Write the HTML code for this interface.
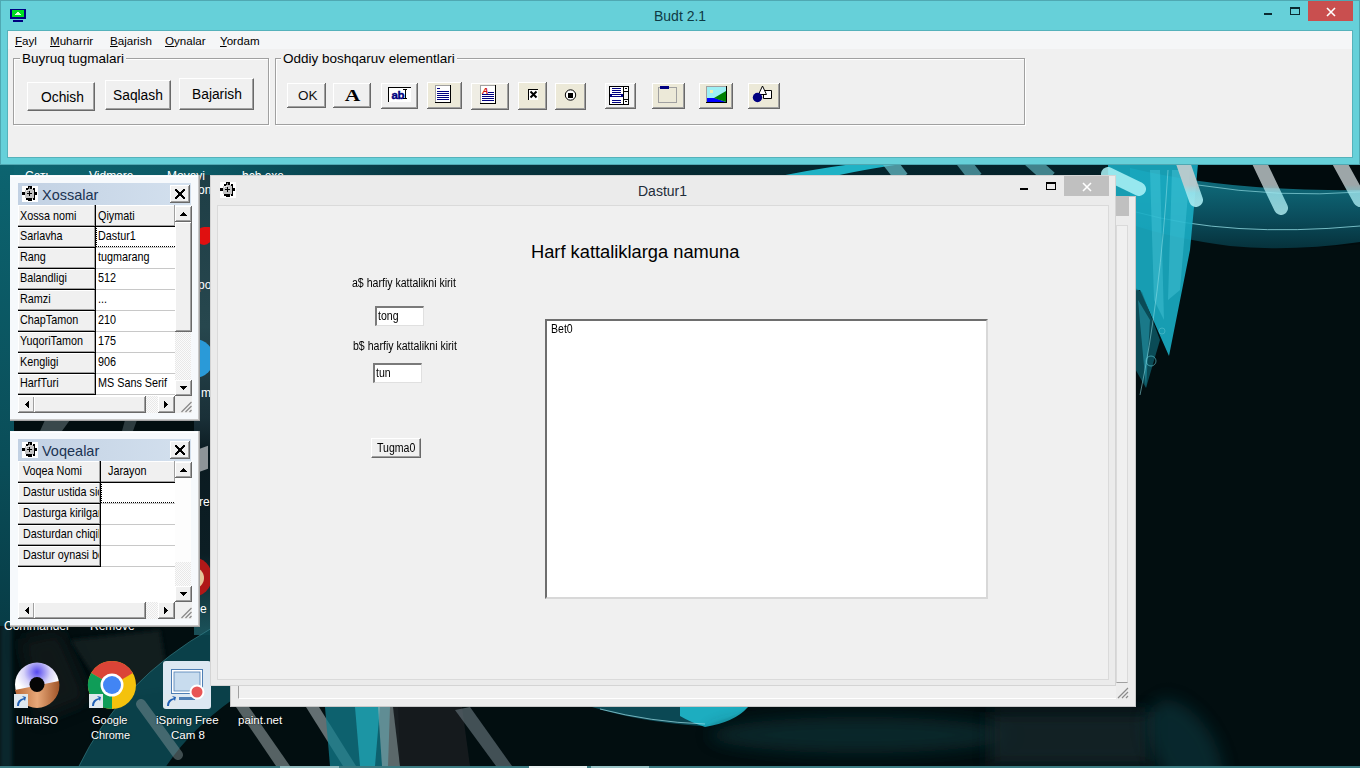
<!DOCTYPE html>
<html><head><meta charset="utf-8">
<style>
*{margin:0;padding:0;box-sizing:border-box}
html,body{width:1360px;height:768px;overflow:hidden;background:#03090c;font-family:"Liberation Sans",sans-serif}
.a{position:absolute}
.t{position:absolute;white-space:pre;line-height:1}
.btn{position:absolute;background:#f0f0f0;border-top:1px solid #fff;border-left:1px solid #fff;border-right:1px solid #696969;border-bottom:1px solid #696969;box-shadow:inset -1px -1px 0 #a0a0a0}
</style></head><body>
<!-- DESKTOP -->
<svg class="a" style="left:0;top:0" width="1360" height="768" viewBox="0 0 1360 768">
<defs>
<filter id="bl2" x="-20%" y="-20%" width="140%" height="140%"><feGaussianBlur stdDeviation="2"/></filter>
<filter id="bl6" x="-50%" y="-50%" width="200%" height="200%"><feGaussianBlur stdDeviation="8"/></filter>
<linearGradient id="gT" x1="0" y1="0" x2="1360" y2="0" gradientUnits="userSpaceOnUse">
<stop offset="0" stop-color="#0d6672"/><stop offset="0.15" stop-color="#0b5864"/><stop offset="0.3" stop-color="#073843"/><stop offset="0.5" stop-color="#052a32"/><stop offset="0.75" stop-color="#04222a"/><stop offset="1" stop-color="#03161b"/></linearGradient>
<linearGradient id="gL" x1="0" y1="160" x2="0" y2="768" gradientUnits="userSpaceOnUse">
<stop offset="0" stop-color="#0c6470"/><stop offset="0.5" stop-color="#0a4d58"/><stop offset="0.8" stop-color="#073a44"/><stop offset="1" stop-color="#05252c"/></linearGradient>
<linearGradient id="gBL" x1="0" y1="0" x2="240" y2="0" gradientUnits="userSpaceOnUse"><stop offset="0" stop-color="#073a44"/><stop offset="0.15" stop-color="#05222a"/><stop offset="0.6" stop-color="#04161b" stop-opacity="0"/></linearGradient>
<linearGradient id="tube" x1="0" y1="160" x2="0" y2="215" gradientUnits="userSpaceOnUse"><stop offset="0" stop-color="#c4cdcf"/><stop offset="0.45" stop-color="#c4cdcf"/><stop offset="0.6" stop-color="#9fe6ee"/><stop offset="1" stop-color="#b5f0f4"/></linearGradient>
<linearGradient id="band" x1="0" y1="185" x2="0" y2="250" gradientUnits="userSpaceOnUse"><stop offset="0" stop-color="#0f6c7c"/><stop offset="0.5" stop-color="#0b5060"/><stop offset="1" stop-color="#06323c"/></linearGradient>
<linearGradient id="gS" x1="0" y1="175" x2="0" y2="680" gradientUnits="userSpaceOnUse"><stop offset="0" stop-color="#1e3e46"/><stop offset="0.3" stop-color="#27474e"/><stop offset="0.48" stop-color="#1a3038"/><stop offset="0.55" stop-color="#0b1b21"/><stop offset="0.75" stop-color="#0c1e24"/><stop offset="0.9" stop-color="#1a5058"/><stop offset="1" stop-color="#15464e"/></linearGradient>
</defs>
<rect width="1360" height="768" fill="#020e10"/>
<rect x="0" y="160" width="1360" height="40" fill="url(#gT)"/>
<rect x="0" y="160" width="14" height="466" fill="url(#gL)"/>
<rect x="194" y="175" width="20" height="460" fill="url(#gS)"/>
<!-- top strip ring highlights -->
<path d="M780 176 Q830 166 885 160 L930 160 Q870 168 835 176 Z" fill="#22c2d6" opacity="0.9"/>
<line x1="888" y1="160" x2="902" y2="178" stroke="#6cc4cf" stroke-width="14" opacity="0.7"/>
<line x1="962" y1="160" x2="976" y2="178" stroke="#6cc4cf" stroke-width="14" opacity="0.6"/>
<line x1="1030" y1="160" x2="1050" y2="178" stroke="#6cc4cf" stroke-width="14" opacity="0.6"/>
<!-- top-right ring -->
<path d="M1110 164 L1360 164 L1360 244 Q1300 250 1250 246 Q1180 238 1130 222 L1110 215 Z" fill="#010b0d"/>
<path d="M1130 168 Q1230 192 1360 190 L1360 242 Q1290 252 1230 246 Q1170 238 1130 224 Z" fill="url(#band)" opacity="0.95"/>
<path d="M1136 212 Q1230 238 1360 226" stroke="#8fd8e0" stroke-width="1" fill="none" opacity="0.8"/>
<path d="M1198 185 Q1280 198 1360 192" stroke="#8fd8e0" stroke-width="1" fill="none" opacity="0.7"/>
<!-- vertical cyan blades -->
<path d="M1108 164 L1198 164 L1190 250 L1169 356 L1140 290 L1110 292 Z" fill="#1aadc4" opacity="0.9"/>
<path d="M1150 170 L1160 170 L1164 320 L1154 300 Z" fill="#5fdcea" opacity="0.3"/>
<path d="M1172 170 L1190 170 L1180 290 L1168 300 Z" fill="#5fdcea" opacity="0.3"/>
<path d="M1130 285 L1142 292 L1160 340 L1146 388 L1130 360 Z" fill="#0f6d7c" opacity="0.65"/>
<path d="M1138 300 L1150 320 L1146 388 Z" fill="#2aa8bb" opacity="0.5"/>
<path d="M1168 170 Q1160 300 1140 395" stroke="#8fe0e8" stroke-width="1" fill="none" opacity="0.55"/>
<circle cx="1151" cy="361" r="5" fill="none" stroke="#5fc8d4" stroke-width="1" opacity="0.6"/>
<circle cx="1162" cy="331" r="3" fill="none" stroke="#5fc8d4" stroke-width="1" opacity="0.5"/>
<!-- white tubes -->
<line x1="1182" y1="160" x2="1196" y2="200" stroke="url(#tube)" stroke-width="14" stroke-linecap="round" opacity="0.9"/>
<line x1="1258" y1="160" x2="1281" y2="208" stroke="url(#tube)" stroke-width="14" stroke-linecap="round" opacity="0.8"/>
<line x1="1338" y1="160" x2="1360" y2="200" stroke="url(#tube)" stroke-width="14" stroke-linecap="round" opacity="0.8"/>
<line x1="1108" y1="174" x2="1139" y2="189" stroke="#aef4f8" stroke-width="14" stroke-linecap="round" opacity="0.85"/>
<!-- gap between panels streaks -->
<polygon points="45,420 70,420 62,431 40,431" fill="#6f8286" opacity="0.5"/>
<polygon points="125,420 137,420 133,431 122,431" fill="#6f8286" opacity="0.4"/>
<!-- bottom-left wallpaper -->
<rect x="0" y="626" width="12" height="142" fill="#0a2e34" opacity="0.8" filter="url(#bl2)"/>
<polygon points="20,640 60,630 90,700 40,720" fill="#121a1e" opacity="0.7" filter="url(#bl6)"/>
<polygon points="70,640 160,630 170,690 110,700" fill="#182024" opacity="0.8" filter="url(#bl2)"/>
<path d="M78 768 Q120 680 212 628 L232 628 L232 700 Q190 730 165 768 Z" fill="#0b4650" opacity="0.9"/>
<path d="M78 768 Q120 680 212 628" stroke="#5fb8c0" stroke-width="1" fill="none" opacity="0.35"/>
<line x1="141" y1="704" x2="178" y2="755" stroke="#8a9a9d" stroke-width="10" stroke-linecap="round" opacity="0.45"/>
<!-- bottom strip -->
<polygon points="236,707 249,707 290,766 276,766" fill="#a9b6b8" opacity="0.5"/>
<polygon points="306,707 319,707 356,766 343,766" fill="#b4c0c2" opacity="0.55"/>
<polygon points="325,707 390,707 388,766 330,766" fill="#127e8e" opacity="0.75"/>
<polygon points="355,707 380,707 375,766 360,766" fill="#27b8c8" opacity="0.6"/>
<polygon points="378,707 398,707 400,766 382,766" fill="#a6b2b4" opacity="0.55"/>
<polygon points="393,707 462,707 470,766 400,766" fill="#161b1f" opacity="0.95"/>
<polygon points="455,710 470,707 512,766 496,766" fill="#5e6c74" opacity="0.7"/>
<path d="M592 707 Q640 722 700 726 Q730 720 748 707 Z" fill="#0c4f5c" opacity="0.9"/>
<path d="M680 707 L748 707 Q735 722 705 727 Q690 722 680 716 Z" fill="#1fb8cc" opacity="0.9"/>
<path d="M600 709 Q650 722 705 724" stroke="#9fe0e8" stroke-width="1" fill="none" opacity="0.7"/>
<ellipse cx="860" cy="735" rx="150" ry="18" fill="#0b3036" opacity="0.7" filter="url(#bl6)"/>
<rect x="990" y="712" width="160" height="54" fill="#15282c" opacity="0.8" filter="url(#bl6)"/>
<ellipse cx="1185" cy="750" rx="30" ry="55" transform="rotate(-30 1185 750)" fill="#0d3d44" opacity="0.55" filter="url(#bl6)"/>
<!-- taskbar edge -->
<rect x="0" y="766" width="1360" height="2" fill="#3c7b82"/>
<rect x="280" y="766" width="59" height="2" fill="#8fb8bc"/>
<rect x="529" y="766" width="58" height="2" fill="#e8f0f0"/>
<rect x="591" y="766" width="58" height="2" fill="#9ac4c7"/>
</svg>
<!-- DESKTOP ICONS -->
<div class="t" style="left:25px;top:170px;font-size:12px;color:#fff">Сеть</div>
<div class="t" style="left:89px;top:170px;font-size:12px;color:#fff">Vidmore</div>
<div class="t" style="left:167px;top:170px;font-size:12px;color:#fff">Movavi</div>
<div class="t" style="left:242px;top:170px;font-size:12px;color:#fff">bcb.exe</div>
<div class="t" style="left:198px;top:184px;font-size:12px;color:#fff">on</div>
<div class="t" style="left:198px;top:279px;font-size:12px;color:#fff">po</div>
<div class="t" style="left:201px;top:387px;font-size:12px;color:#fff">m</div>
<div class="t" style="left:199px;top:496px;font-size:12px;color:#fff">re-</div>
<div class="t" style="left:200px;top:603px;font-size:12px;color:#fff">e</div>
<div class="a" style="left:196px;top:227px;width:16px;height:18px;background:#e01010;border-radius:50% 20% 50% 50%"></div>
<div class="a" style="left:175px;top:339px;width:39px;height:39px;background:#2a9ad8;border-radius:50%"></div>
<div class="a" style="left:190px;top:449px;width:18px;height:23px;background:#8d9498;transform:skewY(-20deg)"></div>
<div class="a" style="left:172px;top:557px;width:40px;height:40px;background:#b01818;border-radius:50%"></div>
<div class="a" style="left:182px;top:567px;width:22px;height:22px;background:#e6c79a;border-radius:50%"></div>
<div class="t" style="left:4px;top:620px;font-size:12px;color:#fff">Commander</div>
<div class="t" style="left:90px;top:620px;font-size:12px;color:#fff">Remove</div>
<!-- UltraISO -->
<svg class="a" style="left:0;top:650px" width="240" height="66">
<defs>
<radialGradient id="ult" cx="37" cy="22" r="22" gradientUnits="userSpaceOnUse"><stop offset="0" stop-color="#5548f0"/><stop offset="0.6" stop-color="#d8d4f8"/><stop offset="1" stop-color="#ffffff"/></radialGradient>
<linearGradient id="ulc" x1="0" y1="0" x2="1" y2="0"><stop offset="0" stop-color="#b86838"/><stop offset="0.5" stop-color="#e8a878"/><stop offset="1" stop-color="#a05428"/></linearGradient>
</defs>
<circle cx="37" cy="34.5" r="22" fill="url(#ult)"/>
<path d="M15 40 L59 31 A22 22 0 0 1 15 40 Z" fill="url(#ulc)"/>
<circle cx="37" cy="34.5" r="7.5" fill="#050505"/>
<circle cx="112" cy="35" r="24" fill="#f4c20d"/>
<path d="M112 35 L91.2 23 A24 24 0 0 1 132.8 23 Z" fill="#db4437"/>
<path d="M112 35 L91.2 23 A24 24 0 0 0 112 59 Z" fill="#0f9d58"/>
<path d="M112 35 L132.8 23 L101 40 Z" fill="#db4437"/>
<circle cx="112" cy="35" r="11.5" fill="#fff"/>
<circle cx="112" cy="35" r="9" fill="#4285f4"/>
<rect x="163" y="11" width="48" height="48" rx="3" fill="#dde8f2"/>
<rect x="171.5" y="19.5" width="31" height="24" fill="#fff" stroke="#4f7fb5" stroke-width="1"/>
<rect x="174" y="22" width="26" height="19" fill="#c8dcee" stroke="#4f7fb5" stroke-width="0.8"/>
<rect x="179" y="47" width="16" height="3" fill="#4f7fb5"/>
<circle cx="197" cy="42" r="6.5" fill="#e85555" stroke="#fff" stroke-width="2"/>
<g id="sc"><rect x="14" y="44" width="14" height="14" fill="#dfe8ee"/><path d="M17 56 Q17 49 24 48 L22 46 L26 47 L25 51 L24 49.5 Q19 51 19 56 Z" fill="#1f5fb4"/></g>
<use href="#sc" x="75"/>
<use href="#sc" x="150"/>
</svg>
<div class="t" style="left:16px;top:715px;font-size:11px;color:#fff;text-shadow:0 0 2px #000">UltraISO</div>
<div class="t" style="left:92px;top:715px;font-size:11px;color:#fff;text-shadow:0 0 2px #000">Google</div>
<div class="t" style="left:91px;top:730px;font-size:11px;color:#fff;text-shadow:0 0 2px #000">Chrome</div>
<div class="t" style="left:156px;top:715px;font-size:11.5px;color:#fff;text-shadow:0 0 2px #000">iSpring Free</div>
<div class="t" style="left:171px;top:730px;font-size:11.5px;color:#fff;text-shadow:0 0 2px #000">Cam 8</div>
<div class="t" style="left:238px;top:715px;font-size:11.5px;color:#fff;text-shadow:0 0 2px #000">paint.net</div>
<!-- MAIN WINDOW -->
<div class="a" style="left:0;top:0;width:1360px;height:165px;background:#66d0d9;border:1px solid #4fa8b2"></div>
<div class="a" style="left:7px;top:30px;width:1346px;height:128px;border:1px solid #55b2bb"></div>
<svg class="a" style="left:0;top:0" width="40" height="30" shape-rendering="crispEdges">
<rect x="10" y="9" width="16" height="10" fill="#000080"/>
<rect x="12" y="10" width="12" height="7" fill="#00e020"/>
<rect x="13" y="20" width="10" height="2" fill="#000080"/>
<path d="M15 15 L21 15 L19 12 L17 12 Z" fill="#e8ffe0"/>
</svg>
<div class="t" style="left:654px;top:9px;font-size:14px;color:#0e3a44">Budt 2.1</div>
<div class="a" style="left:1264px;top:13px;width:8px;height:2px;background:#0b2a30"></div>
<div class="a" style="left:1290px;top:7px;width:10px;height:8px;border:1px solid #0b2a30;border-top-width:2px"></div>
<div class="a" style="left:1308px;top:1px;width:45px;height:20px;background:#c94f4f"></div>
<svg class="a" style="left:1308px;top:1px" width="45" height="20"><path d="M19 7 L27 15 M27 7 L19 15" stroke="#fff" stroke-width="1.6"/></svg>
<!-- client -->
<div class="a" style="left:8px;top:31px;width:1344px;height:126px;background:#f0f0f0"></div>
<div class="a" style="left:8px;top:31px;width:1344px;height:18px;background:#f5f6f7"></div>
<div class="t" style="left:15px;top:35px;font-size:11.6px;color:#000"><u>F</u>ayl</div>
<div class="t" style="left:50px;top:35px;font-size:11.6px;color:#000"><u>M</u>uharrir</div>
<div class="t" style="left:110px;top:35px;font-size:11.6px;color:#000"><u>B</u>ajarish</div>
<div class="t" style="left:165px;top:35px;font-size:11.6px;color:#000"><u>O</u>ynalar</div>
<div class="t" style="left:220px;top:35px;font-size:11.6px;color:#000"><u>Y</u>ordam</div>
<!-- group boxes -->
<div class="a" style="left:13px;top:58px;width:256px;height:67px;border:1px solid #a0a0a0;box-shadow:inset 1px 1px 0 #fff, 1px 1px 0 #fff"></div>
<div class="t" style="left:20px;top:52px;font-size:13.5px;color:#000;background:#f0f0f0;padding:0 2px">Buyruq tugmalari</div>
<div class="a" style="left:275px;top:58px;width:750px;height:67px;border:1px solid #a0a0a0;box-shadow:inset 1px 1px 0 #fff, 1px 1px 0 #fff"></div>
<div class="t" style="left:281px;top:52px;font-size:13.5px;color:#000;background:#f0f0f0;padding:0 2px">Oddiy boshqaruv elementlari</div>
<!-- command buttons -->
<div class="btn" style="left:27px;top:82px;width:68px;height:29px"></div>
<div class="t" style="left:41px;top:91px;font-size:13.8px">Ochish</div>
<div class="btn" style="left:105px;top:80px;width:66px;height:30px"></div>
<div class="t" style="left:113px;top:89px;font-size:13.8px">Saqlash</div>
<div class="btn" style="left:179px;top:78px;width:75px;height:32px"></div>
<div class="t" style="left:192px;top:88px;font-size:13.8px">Bajarish</div>
<svg class="a" style="left:0;top:0" width="800" height="120" shape-rendering="crispEdges">
<rect x="287" y="83" width="39" height="25" fill="#f0f0f0"/><rect x="287" y="83" width="39" height="1" fill="#fff"/><rect x="287" y="83" width="1" height="25" fill="#fff"/><rect x="288" y="106" width="37" height="1" fill="#a0a0a0"/><rect x="324" y="84" width="1" height="23" fill="#a0a0a0"/><rect x="287" y="107" width="39" height="1" fill="#696969"/><rect x="325" y="83" width="1" height="25" fill="#696969"/>
<rect x="333" y="83" width="38" height="25" fill="#f0f0f0"/><rect x="333" y="83" width="38" height="1" fill="#fff"/><rect x="333" y="83" width="1" height="25" fill="#fff"/><rect x="334" y="106" width="36" height="1" fill="#a0a0a0"/><rect x="369" y="84" width="1" height="23" fill="#a0a0a0"/><rect x="333" y="107" width="38" height="1" fill="#696969"/><rect x="370" y="83" width="1" height="25" fill="#696969"/>
<rect x="381" y="83" width="37" height="26" fill="#f0f0f0"/><rect x="381" y="83" width="37" height="1" fill="#fff"/><rect x="381" y="83" width="1" height="26" fill="#fff"/><rect x="382" y="107" width="35" height="1" fill="#a0a0a0"/><rect x="416" y="84" width="1" height="24" fill="#a0a0a0"/><rect x="381" y="108" width="37" height="1" fill="#696969"/><rect x="417" y="83" width="1" height="26" fill="#696969"/>
<rect x="427" y="82" width="35" height="27" fill="#ece9d8"/><rect x="427" y="82" width="35" height="1" fill="#fff"/><rect x="427" y="82" width="1" height="27" fill="#fff"/><rect x="428" y="107" width="33" height="1" fill="#a0a0a0"/><rect x="460" y="83" width="1" height="25" fill="#a0a0a0"/><rect x="427" y="108" width="35" height="1" fill="#696969"/><rect x="461" y="82" width="1" height="27" fill="#696969"/>
<rect x="471" y="83" width="38" height="27" fill="#efede4"/><rect x="471" y="83" width="38" height="1" fill="#fff"/><rect x="471" y="83" width="1" height="27" fill="#fff"/><rect x="472" y="108" width="36" height="1" fill="#a0a0a0"/><rect x="507" y="84" width="1" height="25" fill="#a0a0a0"/><rect x="471" y="109" width="38" height="1" fill="#696969"/><rect x="508" y="83" width="1" height="27" fill="#696969"/>
<rect x="518" y="82" width="29" height="28" fill="#ece9d8"/><rect x="518" y="82" width="29" height="1" fill="#fff"/><rect x="518" y="82" width="1" height="28" fill="#fff"/><rect x="519" y="108" width="27" height="1" fill="#a0a0a0"/><rect x="545" y="83" width="1" height="26" fill="#a0a0a0"/><rect x="518" y="109" width="29" height="1" fill="#696969"/><rect x="546" y="82" width="1" height="28" fill="#696969"/>
<rect x="555" y="83" width="31" height="27" fill="#ece9d8"/><rect x="555" y="83" width="31" height="1" fill="#fff"/><rect x="555" y="83" width="1" height="27" fill="#fff"/><rect x="556" y="108" width="29" height="1" fill="#a0a0a0"/><rect x="584" y="84" width="1" height="25" fill="#a0a0a0"/><rect x="555" y="109" width="31" height="1" fill="#696969"/><rect x="585" y="83" width="1" height="27" fill="#696969"/>
<rect x="605" y="83" width="31" height="26" fill="#f3f3f3"/><rect x="605" y="83" width="31" height="1" fill="#fff"/><rect x="605" y="83" width="1" height="26" fill="#fff"/><rect x="606" y="107" width="29" height="1" fill="#a0a0a0"/><rect x="634" y="84" width="1" height="24" fill="#a0a0a0"/><rect x="605" y="108" width="31" height="1" fill="#696969"/><rect x="635" y="83" width="1" height="26" fill="#696969"/>
<rect x="652" y="83" width="33" height="26" fill="#ece9d8"/><rect x="652" y="83" width="33" height="1" fill="#fff"/><rect x="652" y="83" width="1" height="26" fill="#fff"/><rect x="653" y="107" width="31" height="1" fill="#a0a0a0"/><rect x="683" y="84" width="1" height="24" fill="#a0a0a0"/><rect x="652" y="108" width="33" height="1" fill="#696969"/><rect x="684" y="83" width="1" height="26" fill="#696969"/>
<rect x="699" y="83" width="34" height="26" fill="#ece9d8"/><rect x="699" y="83" width="34" height="1" fill="#fff"/><rect x="699" y="83" width="1" height="26" fill="#fff"/><rect x="700" y="107" width="32" height="1" fill="#a0a0a0"/><rect x="731" y="84" width="1" height="24" fill="#a0a0a0"/><rect x="699" y="108" width="34" height="1" fill="#696969"/><rect x="732" y="83" width="1" height="26" fill="#696969"/>
<rect x="748" y="83" width="32" height="26" fill="#ece9d8"/><rect x="748" y="83" width="32" height="1" fill="#fff"/><rect x="748" y="83" width="1" height="26" fill="#fff"/><rect x="749" y="107" width="30" height="1" fill="#a0a0a0"/><rect x="778" y="84" width="1" height="24" fill="#a0a0a0"/><rect x="748" y="108" width="32" height="1" fill="#696969"/><rect x="779" y="83" width="1" height="26" fill="#696969"/>
<text x="0" y="0" transform="translate(352.5 100.5) scale(1.3 1)" font-family="Liberation Serif" font-weight="bold" font-size="16.5" text-anchor="middle" fill="#000" shape-rendering="auto">A</text>
<rect x="389" y="88" width="22" height="14" fill="#fff"/><rect x="388" y="87" width="23" height="1" fill="#000"/><rect x="388" y="87" width="1" height="15" fill="#000"/>
<text x="391.5" y="98.5" font-family="Liberation Sans" font-weight="bold" font-size="11.5" letter-spacing="-0.3" fill="#000080" stroke="#000080" stroke-width="0.4" shape-rendering="auto">ab</text>
<rect x="403" y="89" width="4" height="1" fill="#000"/><rect x="405" y="89" width="1" height="10" fill="#000"/><rect x="403" y="98" width="4" height="1" fill="#000"/>
<rect x="435" y="85" width="16" height="18" fill="#fff"/><rect x="435" y="85" width="16" height="1" fill="#a0a0a0"/><rect x="435" y="85" width="1" height="18" fill="#a0a0a0"/><rect x="435" y="102" width="16" height="1" fill="#000"/><rect x="450" y="85" width="1" height="18" fill="#000"/>
<rect x="437" y="88" width="3" height="1" fill="#000080"/>
<rect x="437" y="91" width="12" height="1" fill="#000080"/>
<rect x="437" y="93" width="12" height="1" fill="#000080"/>
<rect x="437" y="95" width="12" height="1" fill="#000080"/>
<rect x="437" y="97" width="12" height="1" fill="#000080"/>
<rect x="437" y="99" width="12" height="1" fill="#000080"/>
<rect x="480" y="85" width="16" height="19" fill="#fff"/><rect x="480" y="85" width="16" height="1" fill="#a0a0a0"/><rect x="480" y="85" width="1" height="19" fill="#a0a0a0"/><rect x="480" y="103" width="16" height="1" fill="#000"/><rect x="495" y="85" width="1" height="19" fill="#000"/>
<text x="482" y="93.5" font-family="Liberation Sans" font-style="italic" font-weight="bold" font-size="9" fill="#d01010" shape-rendering="auto">A</text>
<rect x="488" y="92" width="6" height="1" fill="#000080"/>
<rect x="482" y="94" width="12" height="1" fill="#000080"/>
<rect x="482" y="96" width="12" height="1" fill="#000080"/>
<rect x="482" y="98" width="12" height="1" fill="#000080"/>
<rect x="482" y="100" width="12" height="1" fill="#000080"/>
<rect x="529" y="90" width="9" height="10" fill="#fff"/><rect x="528" y="89" width="10" height="1" fill="#000"/><rect x="528" y="89" width="1" height="11" fill="#000"/>
<path d="M530.5 91.5 L536.5 97.5 M536.5 91.5 L530.5 97.5" stroke="#000" stroke-width="2" shape-rendering="auto"/>
<circle cx="570.5" cy="95" r="5.2" fill="#fff" stroke="#000" stroke-width="1" shape-rendering="auto"/><rect x="568" y="92.5" width="5" height="5" fill="#000"/>
<rect x="609" y="86" width="20" height="19" fill="#000"/><rect x="610" y="87" width="13" height="17" fill="#fff"/><rect x="624" y="87" width="4" height="4" fill="#fff"/><rect x="624" y="92" width="4" height="7" fill="#f0f0f0"/><rect x="624" y="100" width="4" height="4" fill="#fff"/>
<rect x="625" y="88" width="2" height="1" fill="#000"/><rect x="625" y="101" width="2" height="1" fill="#000"/>
<rect x="612" y="88" width="9" height="1" fill="#000080"/>
<rect x="612" y="90" width="9" height="1" fill="#000080"/>
<rect x="612" y="92" width="9" height="1" fill="#000080"/>
<rect x="612" y="100" width="9" height="1" fill="#000080"/>
<rect x="612" y="102" width="9" height="1" fill="#000080"/>
<rect x="610" y="94" width="13" height="3" fill="#000080"/><rect x="612" y="95" width="9" height="1" fill="#fff"/>
<rect x="658" y="87" width="19" height="1" fill="#a0a0a0"/><rect x="658" y="87" width="1" height="16" fill="#a0a0a0"/><rect x="658" y="102" width="19" height="1" fill="#a0a0a0"/><rect x="676" y="87" width="1" height="16" fill="#a0a0a0"/>
<rect x="660" y="86" width="9" height="3" fill="#000080"/>
<rect x="706" y="86" width="21" height="17" fill="#000"/><rect x="706" y="86" width="20" height="16" fill="#9ef0f4"/>
<path d="M706 98 L715 98 L726 102 L706 102 Z" fill="#0000ff" shape-rendering="auto"/><path d="M714 98 L726 91 L726 102 Z" fill="#008000" shape-rendering="auto"/><rect x="710" y="90" width="3" height="3" fill="#f0f0b0"/>
<rect x="706" y="86" width="20" height="1" fill="#a0a0a0"/><rect x="706" y="86" width="1" height="16" fill="#a0a0a0"/>
<path d="M763.5 90.5 L771.5 90.5 L771.5 98.5 L763.5 98.5 Z" fill="#fff" stroke="#000" stroke-width="1" shape-rendering="auto"/>
<path d="M762.5 86 L766.5 94.5 L758.5 94.5 Z" fill="#fff" stroke="#000" stroke-width="1" shape-rendering="auto"/>
<circle cx="757.5" cy="97.5" r="4.7" fill="#000080" shape-rendering="auto"/>
</svg>
<div class="t" style="left:298px;top:89px;font-size:13.5px;color:#111">OK</div><!-- BACKGROUND WINDOW -->
<div class="a" style="left:230px;top:196px;width:906px;height:511px;background:#ececec;border:1px solid #c8c8c8"></div>
<div class="a" style="left:1116px;top:196px;width:13px;height:20px;background:#c0c0c0"></div>
<div class="a" style="left:1116px;top:225px;width:12px;height:458px;background:#f0f0f0;border:1px solid #dadada;border-bottom-color:#a0a0a0"></div>
<div class="a" style="left:238px;top:686px;width:878px;height:13px;background:#f0f0f0;border-left:1px solid #a0a0a0;border-bottom:1px solid #fff"></div>
<svg class="a" style="left:1116px;top:686px" width="13" height="13"><path d="M12 2 L2 12 M12 6 L6 12 M12 10 L10 12" stroke="#8a8a8a" stroke-width="1.2"/></svg>
<!-- DASTUR1 -->
<div class="a" style="left:210px;top:175px;width:906px;height:511px;background:#ebebeb;border:1px solid #d4d4d4"></div>
<svg class="a" style="left:220px;top:182px" width="16" height="16" shape-rendering="crispEdges"><rect width="16" height="16" fill="#fff"/><rect x="3" y="3" width="10" height="10" rx="3" fill="#c4c4c4"/><rect x="6" y="0" width="4" height="3" fill="#000"/><rect x="7" y="1" width="1" height="2" fill="#888"/><rect x="0" y="6" width="3" height="3" fill="#000"/><rect x="12" y="6" width="3" height="3" fill="#000"/><rect x="6" y="12" width="4" height="3" fill="#000"/><rect x="4" y="2" width="2" height="2" fill="#000"/><rect x="11" y="2" width="2" height="2" fill="#000"/><rect x="4" y="12" width="2" height="2" fill="#000"/><rect x="11" y="12" width="2" height="2" fill="#000"/><rect x="12" y="4" width="1" height="8" fill="#000"/><rect x="5" y="5" width="2" height="1" fill="#000"/><rect x="5" y="7" width="5" height="1" fill="#000"/><rect x="7" y="5" width="1" height="5" fill="#000"/><rect x="4" y="4" width="3" height="2" fill="#fff" opacity="0.6"/></svg>
<div class="t" style="left:638px;top:184px;font-size:14px;color:#1e2c3a">Dastur1</div>
<div class="a" style="left:1020px;top:188px;width:8px;height:2px;background:#000"></div>
<div class="a" style="left:1046px;top:182px;width:10px;height:8px;border:1px solid #000;border-top-width:2px"></div>
<div class="a" style="left:1064px;top:176px;width:45px;height:20px;background:#c0c0c0"></div>
<svg class="a" style="left:1064px;top:176px" width="45" height="20"><path d="M19 7 L27 15 M27 7 L19 15" stroke="#fff" stroke-width="1.6"/></svg>
<div class="a" style="left:217px;top:205px;width:892px;height:475px;background:#f0f0f0;border:1px solid #dadada"></div>
<!-- form content -->
<div class="t" style="left:531px;top:243px;font-size:18.3px;color:#000">Harf kattaliklarga namuna</div>
<div class="t" style="left:352px;top:277px;font-size:12px;transform:scaleX(0.88);transform-origin:0 0;color:#000">a$ harfiy kattalikni kirit</div>
<div class="t" style="left:353px;top:340px;font-size:12px;transform:scaleX(0.88);transform-origin:0 0;color:#000">b$ harfiy kattalikni kirit</div>
<div class="a" style="left:375px;top:306px;width:49px;height:20px;background:#fff;border-top:2px solid #7a7a7a;border-left:2px solid #7a7a7a;border-right:1px solid #e0e0e0;border-bottom:1px solid #e0e0e0"></div>
<div class="t" style="left:378px;top:310px;font-size:12px;transform:scaleX(0.88);transform-origin:0 0">tong</div>
<div class="a" style="left:373px;top:363px;width:49px;height:20px;background:#fff;border-top:2px solid #7a7a7a;border-left:2px solid #7a7a7a;border-right:1px solid #e0e0e0;border-bottom:1px solid #e0e0e0"></div>
<div class="t" style="left:376px;top:367px;font-size:12px;transform:scaleX(0.88);transform-origin:0 0">tun</div>
<div class="btn" style="left:371px;top:438px;width:50px;height:20px"></div>
<div class="t" style="left:377px;top:442px;font-size:12px;transform:scaleX(0.88);transform-origin:0 0">Tugma0</div>
<div class="a" style="left:545px;top:319px;width:443px;height:280px;background:#fff;border-top:2px solid #6e6e6e;border-left:2px solid #6e6e6e;border-right:2px solid #d8d8d8;border-bottom:2px solid #d8d8d8"></div>
<div class="t" style="left:551px;top:323px;font-size:12px;transform:scaleX(0.88);transform-origin:0 0">Bet0</div>
<svg class="a" style="left:0;top:0" width="210" height="640" shape-rendering="crispEdges">
<defs><linearGradient id="tg" x1="0" y1="0" x2="1" y2="0"><stop offset="0" stop-color="#c2d1e3"/><stop offset="1" stop-color="#d3e0ee"/></linearGradient><pattern id="hatch" width="2" height="2" patternUnits="userSpaceOnUse"><rect width="2" height="2" fill="#fbfbfb"/><rect width="1" height="1" fill="#e8e8e8"/><rect x="1" y="1" width="1" height="1" fill="#e8e8e8"/></pattern></defs>
<rect x="10" y="175" width="190" height="246" fill="#a4a4a4"/>
<rect x="10" y="175" width="189" height="245" fill="#c8c8c8"/>
<rect x="10" y="175" width="188" height="244" fill="#f6f9fc"/>
<rect x="11" y="176" width="187" height="1" fill="#ffffff"/>
<rect x="18" y="183" width="173" height="22" fill="url(#tg)"/>
<g transform="translate(22,186)"><rect width="16" height="16" fill="#fff"/><rect x="3" y="3" width="10" height="10" rx="3" fill="#c4c4c4"/><rect x="6" y="0" width="4" height="3" fill="#000"/><rect x="7" y="1" width="1" height="2" fill="#888"/><rect x="0" y="6" width="3" height="3" fill="#000"/><rect x="12" y="6" width="3" height="3" fill="#000"/><rect x="6" y="12" width="4" height="3" fill="#000"/><rect x="4" y="2" width="2" height="2" fill="#000"/><rect x="11" y="2" width="2" height="2" fill="#000"/><rect x="4" y="12" width="2" height="2" fill="#000"/><rect x="11" y="12" width="2" height="2" fill="#000"/><rect x="12" y="4" width="1" height="8" fill="#000"/><rect x="5" y="5" width="2" height="1" fill="#000"/><rect x="5" y="7" width="5" height="1" fill="#000"/><rect x="7" y="5" width="1" height="5" fill="#000"/><rect x="4" y="4" width="3" height="2" fill="#fff" opacity="0.6"/></g>
<text x="42" y="200" font-family="Liberation Sans" font-size="14.5" fill="#1b3352">Xossalar</text>
<rect x="170" y="185" width="20" height="18" fill="#f0f0f0"/><rect x="170" y="185" width="20" height="1" fill="#fff"/><rect x="170" y="185" width="1" height="18" fill="#fff"/><rect x="171" y="201" width="18" height="1" fill="#a0a0a0"/><rect x="188" y="186" width="1" height="16" fill="#a0a0a0"/><rect x="170" y="202" width="20" height="1" fill="#696969"/><rect x="189" y="185" width="1" height="18" fill="#696969"/>
<path d="M176 190 L184 198 M184 190 L176 198" stroke="#000" stroke-width="2.2" stroke-linecap="square"/>
<rect x="18" y="205" width="157" height="191" fill="#fff"/>
<rect x="18" y="205" width="157" height="21" fill="#f0f0f0"/>
<clipPath id="c1"><rect x="18" y="205" width="76" height="400"/></clipPath>
<rect x="18" y="205" width="1" height="21" fill="#fff"/>
<rect x="18" y="205" width="77" height="1" fill="#fff"/>
<rect x="96" y="205" width="79" height="1" fill="#fff"/>
<rect x="94" y="205" width="1" height="21" fill="#a0a0a0"/>
<rect x="174" y="205" width="1" height="21" fill="#a0a0a0"/>
<text transform="translate(20 220) scale(0.9 1)" font-family="Liberation Sans" font-size="12" fill="#000">Xossa nomi</text>
<text transform="translate(98 220) scale(0.9 1)" font-family="Liberation Sans" font-size="12" fill="#000">Qiymati</text>
<rect x="18" y="225" width="76" height="1" fill="#a0a0a0"/>
<rect x="96" y="225" width="78" height="1" fill="#a0a0a0"/>
<rect x="18" y="226" width="157" height="1" fill="#000"/>
<rect x="18" y="227" width="77" height="20" fill="#f0f0f0"/>
<rect x="18" y="227" width="77" height="1" fill="#fff"/>
<rect x="18" y="227" width="1" height="20" fill="#fff"/>
<rect x="94" y="227" width="1" height="20" fill="#a0a0a0"/>
<rect x="18" y="247" width="77" height="1" fill="#000"/>
<rect x="96" y="247" width="79" height="1" fill="#c8c8c8"/>
<g clip-path="url(#c1)"><text transform="translate(20 240) scale(0.9 1)" font-family="Liberation Sans" font-size="12" fill="#000">Sarlavha</text></g>
<rect x="18" y="246" width="76" height="1" fill="#a0a0a0"/>
<text transform="translate(98 240) scale(0.9 1)" font-family="Liberation Sans" font-size="12" fill="#000">Dastur1</text>
<rect x="96.5" y="226.5" width="81" height="20" fill="none" stroke="#000" stroke-width="1" stroke-dasharray="1 1"/>
<rect x="18" y="248" width="77" height="20" fill="#f0f0f0"/>
<rect x="18" y="248" width="77" height="1" fill="#fff"/>
<rect x="18" y="248" width="1" height="20" fill="#fff"/>
<rect x="94" y="248" width="1" height="20" fill="#a0a0a0"/>
<rect x="18" y="268" width="77" height="1" fill="#000"/>
<rect x="96" y="268" width="79" height="1" fill="#c8c8c8"/>
<g clip-path="url(#c1)"><text transform="translate(20 261) scale(0.9 1)" font-family="Liberation Sans" font-size="12" fill="#000">Rang</text></g>
<rect x="18" y="267" width="76" height="1" fill="#a0a0a0"/>
<text transform="translate(98 261) scale(0.9 1)" font-family="Liberation Sans" font-size="12" fill="#000">tugmarang</text>
<rect x="18" y="269" width="77" height="20" fill="#f0f0f0"/>
<rect x="18" y="269" width="77" height="1" fill="#fff"/>
<rect x="18" y="269" width="1" height="20" fill="#fff"/>
<rect x="94" y="269" width="1" height="20" fill="#a0a0a0"/>
<rect x="18" y="289" width="77" height="1" fill="#000"/>
<rect x="96" y="289" width="79" height="1" fill="#c8c8c8"/>
<g clip-path="url(#c1)"><text transform="translate(20 282) scale(0.9 1)" font-family="Liberation Sans" font-size="12" fill="#000">Balandligi</text></g>
<rect x="18" y="288" width="76" height="1" fill="#a0a0a0"/>
<text transform="translate(98 282) scale(0.9 1)" font-family="Liberation Sans" font-size="12" fill="#000">512</text>
<rect x="18" y="290" width="77" height="20" fill="#f0f0f0"/>
<rect x="18" y="290" width="77" height="1" fill="#fff"/>
<rect x="18" y="290" width="1" height="20" fill="#fff"/>
<rect x="94" y="290" width="1" height="20" fill="#a0a0a0"/>
<rect x="18" y="310" width="77" height="1" fill="#000"/>
<rect x="96" y="310" width="79" height="1" fill="#c8c8c8"/>
<g clip-path="url(#c1)"><text transform="translate(20 303) scale(0.9 1)" font-family="Liberation Sans" font-size="12" fill="#000">Ramzi</text></g>
<rect x="18" y="309" width="76" height="1" fill="#a0a0a0"/>
<text transform="translate(98 303) scale(0.9 1)" font-family="Liberation Sans" font-size="12" fill="#000">...</text>
<rect x="18" y="311" width="77" height="20" fill="#f0f0f0"/>
<rect x="18" y="311" width="77" height="1" fill="#fff"/>
<rect x="18" y="311" width="1" height="20" fill="#fff"/>
<rect x="94" y="311" width="1" height="20" fill="#a0a0a0"/>
<rect x="18" y="331" width="77" height="1" fill="#000"/>
<rect x="96" y="331" width="79" height="1" fill="#c8c8c8"/>
<g clip-path="url(#c1)"><text transform="translate(20 324) scale(0.9 1)" font-family="Liberation Sans" font-size="12" fill="#000">ChapTamon</text></g>
<rect x="18" y="330" width="76" height="1" fill="#a0a0a0"/>
<text transform="translate(98 324) scale(0.9 1)" font-family="Liberation Sans" font-size="12" fill="#000">210</text>
<rect x="18" y="332" width="77" height="20" fill="#f0f0f0"/>
<rect x="18" y="332" width="77" height="1" fill="#fff"/>
<rect x="18" y="332" width="1" height="20" fill="#fff"/>
<rect x="94" y="332" width="1" height="20" fill="#a0a0a0"/>
<rect x="18" y="352" width="77" height="1" fill="#000"/>
<rect x="96" y="352" width="79" height="1" fill="#c8c8c8"/>
<g clip-path="url(#c1)"><text transform="translate(20 345) scale(0.9 1)" font-family="Liberation Sans" font-size="12" fill="#000">YuqoriTamon</text></g>
<rect x="18" y="351" width="76" height="1" fill="#a0a0a0"/>
<text transform="translate(98 345) scale(0.9 1)" font-family="Liberation Sans" font-size="12" fill="#000">175</text>
<rect x="18" y="353" width="77" height="20" fill="#f0f0f0"/>
<rect x="18" y="353" width="77" height="1" fill="#fff"/>
<rect x="18" y="353" width="1" height="20" fill="#fff"/>
<rect x="94" y="353" width="1" height="20" fill="#a0a0a0"/>
<rect x="18" y="373" width="77" height="1" fill="#000"/>
<rect x="96" y="373" width="79" height="1" fill="#c8c8c8"/>
<g clip-path="url(#c1)"><text transform="translate(20 366) scale(0.9 1)" font-family="Liberation Sans" font-size="12" fill="#000">Kengligi</text></g>
<rect x="18" y="372" width="76" height="1" fill="#a0a0a0"/>
<text transform="translate(98 366) scale(0.9 1)" font-family="Liberation Sans" font-size="12" fill="#000">906</text>
<rect x="18" y="374" width="77" height="20" fill="#f0f0f0"/>
<rect x="18" y="374" width="77" height="1" fill="#fff"/>
<rect x="18" y="374" width="1" height="20" fill="#fff"/>
<rect x="94" y="374" width="1" height="20" fill="#a0a0a0"/>
<rect x="18" y="394" width="77" height="1" fill="#000"/>
<rect x="96" y="394" width="79" height="1" fill="#c8c8c8"/>
<g clip-path="url(#c1)"><text transform="translate(20 387) scale(0.9 1)" font-family="Liberation Sans" font-size="12" fill="#000">HarfTuri</text></g>
<rect x="18" y="393" width="76" height="1" fill="#a0a0a0"/>
<text transform="translate(98 387) scale(0.9 1)" font-family="Liberation Sans" font-size="12" fill="#000">MS Sans Serif</text>
<rect x="95" y="205" width="1" height="190" fill="#000"/>
<rect x="175" y="206" width="16" height="190" fill="url(#hatch)"/>
<rect x="175" y="206" width="17" height="16" fill="#f0f0f0"/><rect x="175" y="206" width="17" height="1" fill="#fff"/><rect x="175" y="206" width="1" height="16" fill="#fff"/><rect x="176" y="220" width="15" height="1" fill="#a0a0a0"/><rect x="190" y="207" width="1" height="14" fill="#a0a0a0"/><rect x="175" y="221" width="17" height="1" fill="#696969"/><rect x="191" y="206" width="1" height="16" fill="#696969"/>
<path d="M179.5 216 L183.5 212 L187.5 216 Z" fill="#000"/>
<rect x="175" y="380" width="17" height="16" fill="#f0f0f0"/><rect x="175" y="380" width="17" height="1" fill="#fff"/><rect x="175" y="380" width="1" height="16" fill="#fff"/><rect x="176" y="394" width="15" height="1" fill="#a0a0a0"/><rect x="190" y="381" width="1" height="14" fill="#a0a0a0"/><rect x="175" y="395" width="17" height="1" fill="#696969"/><rect x="191" y="380" width="1" height="16" fill="#696969"/>
<path d="M179.5 386 L183.5 390 L187.5 386 Z" fill="#000"/>
<rect x="175" y="222" width="17" height="110" fill="#f0f0f0"/><rect x="175" y="222" width="17" height="1" fill="#fff"/><rect x="175" y="222" width="1" height="110" fill="#fff"/><rect x="176" y="330" width="15" height="1" fill="#a0a0a0"/><rect x="190" y="223" width="1" height="108" fill="#a0a0a0"/><rect x="175" y="331" width="17" height="1" fill="#696969"/><rect x="191" y="222" width="1" height="110" fill="#696969"/>
<rect x="18" y="396" width="157" height="17" fill="url(#hatch)"/>
<rect x="18" y="396" width="17" height="17" fill="#f0f0f0"/><rect x="18" y="396" width="17" height="1" fill="#fff"/><rect x="18" y="396" width="1" height="17" fill="#fff"/><rect x="19" y="411" width="15" height="1" fill="#a0a0a0"/><rect x="33" y="397" width="1" height="15" fill="#a0a0a0"/><rect x="18" y="412" width="17" height="1" fill="#696969"/><rect x="34" y="396" width="1" height="17" fill="#696969"/>
<path d="M29 400.5 L25 404.5 L29 408.5 Z" fill="#000"/>
<rect x="34" y="396" width="112" height="17" fill="#f0f0f0"/><rect x="34" y="396" width="112" height="1" fill="#fff"/><rect x="34" y="396" width="1" height="17" fill="#fff"/><rect x="35" y="411" width="110" height="1" fill="#a0a0a0"/><rect x="144" y="397" width="1" height="15" fill="#a0a0a0"/><rect x="34" y="412" width="112" height="1" fill="#696969"/><rect x="145" y="396" width="1" height="17" fill="#696969"/>
<rect x="158" y="396" width="17" height="17" fill="#f0f0f0"/><rect x="158" y="396" width="17" height="1" fill="#fff"/><rect x="158" y="396" width="1" height="17" fill="#fff"/><rect x="159" y="411" width="15" height="1" fill="#a0a0a0"/><rect x="173" y="397" width="1" height="15" fill="#a0a0a0"/><rect x="158" y="412" width="17" height="1" fill="#696969"/><rect x="174" y="396" width="1" height="17" fill="#696969"/>
<path d="M164 400.5 L168 404.5 L164 408.5 Z" fill="#000"/>
<rect x="175" y="396" width="17" height="17" fill="#f0f0f0"/>
<path d="M190 399 L178 411" stroke="none"/>
<path d="M186 399 L178 411" stroke="none"/>
<path d="M182 399 L178 411" stroke="none"/>
<path d="M191.5 402 L181.5 412 M191.5 406 L185.5 412 M191.5 410 L189.5 412" stroke="#8a8a8a" stroke-width="1.3" shape-rendering="auto"/>
<rect x="10" y="431" width="190" height="196" fill="#a4a4a4"/>
<rect x="10" y="431" width="189" height="195" fill="#c8c8c8"/>
<rect x="10" y="431" width="188" height="194" fill="#f6f9fc"/>
<rect x="11" y="432" width="187" height="1" fill="#ffffff"/>
<rect x="18" y="439" width="173" height="22" fill="url(#tg)"/>
<g transform="translate(22,442)"><rect width="16" height="16" fill="#fff"/><rect x="3" y="3" width="10" height="10" rx="3" fill="#c4c4c4"/><rect x="6" y="0" width="4" height="3" fill="#000"/><rect x="7" y="1" width="1" height="2" fill="#888"/><rect x="0" y="6" width="3" height="3" fill="#000"/><rect x="12" y="6" width="3" height="3" fill="#000"/><rect x="6" y="12" width="4" height="3" fill="#000"/><rect x="4" y="2" width="2" height="2" fill="#000"/><rect x="11" y="2" width="2" height="2" fill="#000"/><rect x="4" y="12" width="2" height="2" fill="#000"/><rect x="11" y="12" width="2" height="2" fill="#000"/><rect x="12" y="4" width="1" height="8" fill="#000"/><rect x="5" y="5" width="2" height="1" fill="#000"/><rect x="5" y="7" width="5" height="1" fill="#000"/><rect x="7" y="5" width="1" height="5" fill="#000"/><rect x="4" y="4" width="3" height="2" fill="#fff" opacity="0.6"/></g>
<text x="42" y="456" font-family="Liberation Sans" font-size="14.5" fill="#1b3352">Voqealar</text>
<rect x="170" y="441" width="20" height="18" fill="#f0f0f0"/><rect x="170" y="441" width="20" height="1" fill="#fff"/><rect x="170" y="441" width="1" height="18" fill="#fff"/><rect x="171" y="457" width="18" height="1" fill="#a0a0a0"/><rect x="188" y="442" width="1" height="16" fill="#a0a0a0"/><rect x="170" y="458" width="20" height="1" fill="#696969"/><rect x="189" y="441" width="1" height="18" fill="#696969"/>
<path d="M176 446 L184 454 M184 446 L176 454" stroke="#000" stroke-width="2.2" stroke-linecap="square"/>
<rect x="18" y="461" width="157" height="141" fill="#fff"/>
<rect x="18" y="461" width="157" height="21" fill="#f0f0f0"/>
<clipPath id="c2"><rect x="18" y="461" width="81" height="400"/></clipPath>
<rect x="18" y="461" width="1" height="21" fill="#fff"/>
<rect x="18" y="461" width="82" height="1" fill="#fff"/>
<rect x="101" y="461" width="74" height="1" fill="#fff"/>
<rect x="99" y="461" width="1" height="21" fill="#a0a0a0"/>
<rect x="174" y="461" width="1" height="21" fill="#a0a0a0"/>
<text transform="translate(23 475) scale(0.9 1)" font-family="Liberation Sans" font-size="12" fill="#000">Voqea Nomi</text>
<text transform="translate(108 475) scale(0.9 1)" font-family="Liberation Sans" font-size="12" fill="#000">Jarayon</text>
<rect x="18" y="481" width="81" height="1" fill="#a0a0a0"/>
<rect x="101" y="481" width="73" height="1" fill="#a0a0a0"/>
<rect x="18" y="482" width="157" height="1" fill="#000"/>
<rect x="18" y="483" width="82" height="20" fill="#f0f0f0"/>
<rect x="18" y="483" width="82" height="1" fill="#fff"/>
<rect x="18" y="483" width="1" height="20" fill="#fff"/>
<rect x="99" y="483" width="1" height="20" fill="#a0a0a0"/>
<rect x="18" y="503" width="82" height="1" fill="#000"/>
<rect x="101" y="503" width="74" height="1" fill="#c8c8c8"/>
<g clip-path="url(#c2)"><text transform="translate(23 496) scale(0.9 1)" font-family="Liberation Sans" font-size="12" fill="#000">Dastur ustida sichqoncha</text></g>
<rect x="18" y="502" width="81" height="1" fill="#a0a0a0"/>
<rect x="101.5" y="482.5" width="76" height="20" fill="none" stroke="#000" stroke-width="1" stroke-dasharray="1 1"/>
<rect x="18" y="504" width="82" height="20" fill="#f0f0f0"/>
<rect x="18" y="504" width="82" height="1" fill="#fff"/>
<rect x="18" y="504" width="1" height="20" fill="#fff"/>
<rect x="99" y="504" width="1" height="20" fill="#a0a0a0"/>
<rect x="18" y="524" width="82" height="1" fill="#000"/>
<rect x="101" y="524" width="74" height="1" fill="#c8c8c8"/>
<g clip-path="url(#c2)"><text transform="translate(23 517) scale(0.9 1)" font-family="Liberation Sans" font-size="12" fill="#000">Dasturga kirilganda</text></g>
<rect x="18" y="523" width="81" height="1" fill="#a0a0a0"/>
<rect x="18" y="525" width="82" height="20" fill="#f0f0f0"/>
<rect x="18" y="525" width="82" height="1" fill="#fff"/>
<rect x="18" y="525" width="1" height="20" fill="#fff"/>
<rect x="99" y="525" width="1" height="20" fill="#a0a0a0"/>
<rect x="18" y="545" width="82" height="1" fill="#000"/>
<rect x="101" y="545" width="74" height="1" fill="#c8c8c8"/>
<g clip-path="url(#c2)"><text transform="translate(23 538) scale(0.9 1)" font-family="Liberation Sans" font-size="12" fill="#000">Dasturdan chiqilganda</text></g>
<rect x="18" y="544" width="81" height="1" fill="#a0a0a0"/>
<rect x="18" y="546" width="82" height="20" fill="#f0f0f0"/>
<rect x="18" y="546" width="82" height="1" fill="#fff"/>
<rect x="18" y="546" width="1" height="20" fill="#fff"/>
<rect x="99" y="546" width="1" height="20" fill="#a0a0a0"/>
<rect x="18" y="566" width="82" height="1" fill="#000"/>
<rect x="101" y="566" width="74" height="1" fill="#c8c8c8"/>
<g clip-path="url(#c2)"><text transform="translate(23 559) scale(0.9 1)" font-family="Liberation Sans" font-size="12" fill="#000">Dastur oynasi bosilganda</text></g>
<rect x="18" y="565" width="81" height="1" fill="#a0a0a0"/>
<rect x="100" y="461" width="1" height="106" fill="#000"/>
<rect x="175" y="462" width="16" height="140" fill="url(#hatch)"/>
<rect x="175" y="462" width="17" height="16" fill="#f0f0f0"/><rect x="175" y="462" width="17" height="1" fill="#fff"/><rect x="175" y="462" width="1" height="16" fill="#fff"/><rect x="176" y="476" width="15" height="1" fill="#a0a0a0"/><rect x="190" y="463" width="1" height="14" fill="#a0a0a0"/><rect x="175" y="477" width="17" height="1" fill="#696969"/><rect x="191" y="462" width="1" height="16" fill="#696969"/>
<path d="M179.5 472 L183.5 468 L187.5 472 Z" fill="#000"/>
<rect x="175" y="586" width="17" height="16" fill="#f0f0f0"/><rect x="175" y="586" width="17" height="1" fill="#fff"/><rect x="175" y="586" width="1" height="16" fill="#fff"/><rect x="176" y="600" width="15" height="1" fill="#a0a0a0"/><rect x="190" y="587" width="1" height="14" fill="#a0a0a0"/><rect x="175" y="601" width="17" height="1" fill="#696969"/><rect x="191" y="586" width="1" height="16" fill="#696969"/>
<path d="M179.5 592 L183.5 596 L187.5 592 Z" fill="#000"/>
<rect x="175" y="478" width="16" height="84" fill="#fdfdfd"/>
<rect x="18" y="602" width="157" height="17" fill="url(#hatch)"/>
<rect x="18" y="602" width="17" height="17" fill="#f0f0f0"/><rect x="18" y="602" width="17" height="1" fill="#fff"/><rect x="18" y="602" width="1" height="17" fill="#fff"/><rect x="19" y="617" width="15" height="1" fill="#a0a0a0"/><rect x="33" y="603" width="1" height="15" fill="#a0a0a0"/><rect x="18" y="618" width="17" height="1" fill="#696969"/><rect x="34" y="602" width="1" height="17" fill="#696969"/>
<path d="M29 606.5 L25 610.5 L29 614.5 Z" fill="#000"/>
<rect x="34" y="602" width="112" height="17" fill="#f0f0f0"/><rect x="34" y="602" width="112" height="1" fill="#fff"/><rect x="34" y="602" width="1" height="17" fill="#fff"/><rect x="35" y="617" width="110" height="1" fill="#a0a0a0"/><rect x="144" y="603" width="1" height="15" fill="#a0a0a0"/><rect x="34" y="618" width="112" height="1" fill="#696969"/><rect x="145" y="602" width="1" height="17" fill="#696969"/>
<rect x="158" y="602" width="17" height="17" fill="#f0f0f0"/><rect x="158" y="602" width="17" height="1" fill="#fff"/><rect x="158" y="602" width="1" height="17" fill="#fff"/><rect x="159" y="617" width="15" height="1" fill="#a0a0a0"/><rect x="173" y="603" width="1" height="15" fill="#a0a0a0"/><rect x="158" y="618" width="17" height="1" fill="#696969"/><rect x="174" y="602" width="1" height="17" fill="#696969"/>
<path d="M164 606.5 L168 610.5 L164 614.5 Z" fill="#000"/>
<rect x="175" y="602" width="17" height="17" fill="#f0f0f0"/>
<path d="M190 605 L178 617" stroke="none"/>
<path d="M186 605 L178 617" stroke="none"/>
<path d="M182 605 L178 617" stroke="none"/>
<path d="M191.5 608 L181.5 618 M191.5 612 L185.5 618 M191.5 616 L189.5 618" stroke="#8a8a8a" stroke-width="1.3" shape-rendering="auto"/>
</svg></body></html>
